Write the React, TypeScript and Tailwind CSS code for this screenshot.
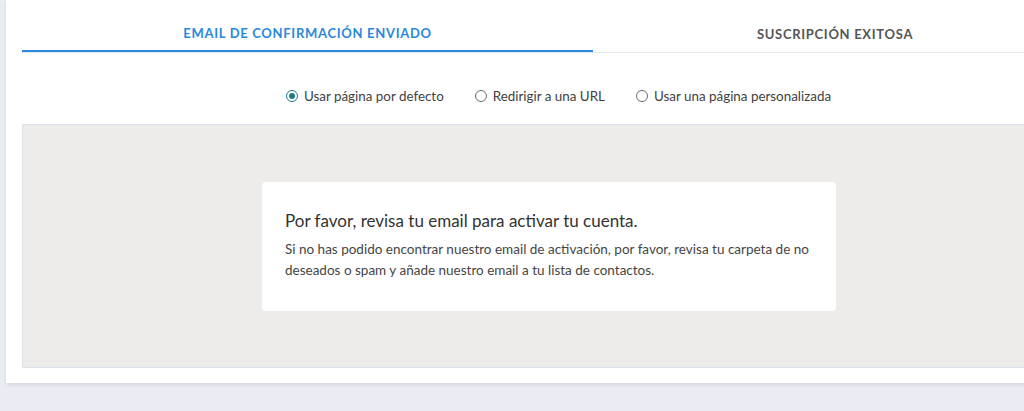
const options = [
	{ label: "Usar página por defecto", checked: true },
	{ label: "Redirigir a una URL", checked: false },
	{ label: "Usar una página personalizada", checked: false },
];

function Radio({ checked }: { checked: boolean }) {
	return (
		<span
			className={`flex h-[12px] w-[12px] items-center justify-center rounded-full border ${
				checked ? "border-[#1d7a8a]" : "border-[#6b6b6b]"
			} bg-white`}>
			{checked && <span className="h-[6px] w-[6px] rounded-full bg-[#1d7a8a]" />}
		</span>
	);
}

export default function App() {
	return (
		<div className="h-[411px] w-[1024px] overflow-hidden bg-[#e9ecf3] font-['Lato',sans-serif]">
			<div className="ml-[6px] w-[1087px] bg-white px-4 pb-[15px] shadow-[0_2px_4px_rgba(0,0,0,0.08)]">
				<div className="flex border-b border-[#e3e8ef]">
					<div className="-mb-px flex h-[52px] w-[571px] items-center justify-center border-b-2 border-[#2a88dd] pt-[17px] text-[13px] font-bold tracking-[0.7px] text-[#2a88dd]">
						EMAIL DE CONFIRMACIÓN ENVIADO
					</div>
					<div className="flex h-[52px] w-[484px] items-center justify-center pt-[17px] text-[13px] font-bold tracking-[0.7px] text-[#555]">
						SUSCRIPCIÓN EXITOSA
					</div>
				</div>
				<div className="flex h-[71px] items-center justify-center gap-[31px] pl-[18px] pt-[16px] text-[13.4px] text-[#3f3f3f]">
					{options.map((o) => (
						<label key={o.label} className="flex items-center gap-[6px]">
							<Radio checked={o.checked} />
							<span>{o.label}</span>
						</label>
					))}
				</div>
				<div className="flex h-[244px] items-center justify-center border border-[#dde2ea] bg-[#edecea]">
					<div className="mr-[1px] w-[574px] rounded-[4px] bg-white px-[23px] pb-[30px] pt-[28px] text-[#3b3b3b]">
						<h2 className="text-[17px] leading-[22px] text-[#333]">Por favor, revisa tu email para activar tu cuenta.</h2>
						<p className="mt-[7px] text-[13.5px] leading-[21px] text-[#454545]">
							Si no has podido encontrar nuestro email de activación, por favor, revisa tu carpeta de no deseados o spam y añade nuestro
							email a tu lista de contactos.
						</p>
					</div>
				</div>
			</div>
		</div>
	);
}
